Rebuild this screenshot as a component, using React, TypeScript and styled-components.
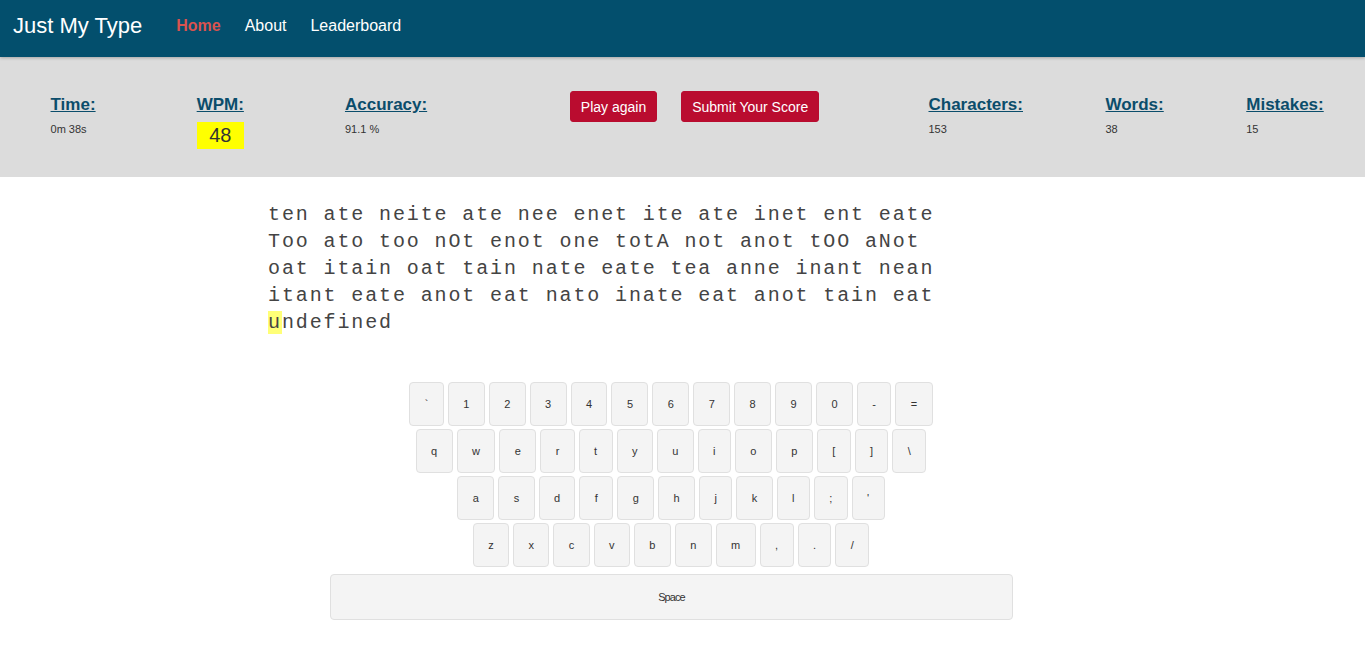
import React from "react";
import styled, { createGlobalStyle } from "styled-components";

const GlobalStyle = createGlobalStyle`
  html, body { margin: 0; padding: 0; background: #ffffff; }
  body { font-family: "Liberation Sans", Arial, sans-serif; }
  * { box-sizing: border-box; }
`;

const Header = styled.header`
  position: relative;
  z-index: 1;
  height: 57px;
  padding: 0 0 6px 13px;
  background: #034f6d;
  display: flex;
  align-items: center;
  box-shadow: 0 1px 3px rgba(0, 0, 0, 0.25);
`;

const Brand = styled.div`
  font-size: 22px;
  color: #ffffff;
  margin-right: 22px;
  white-space: nowrap;
`;

const NavLink = styled.a<{ $active?: boolean }>`
  font-size: 16px;
  padding: 0 12px;
  color: ${(p) => (p.$active ? "#d9534f" : "#ffffff")};
  font-weight: ${(p) => (p.$active ? 700 : 400)};
  text-decoration: none;
  white-space: nowrap;
`;

const Stats = styled.section`
  height: 120px;
  background: #dcdcdc;
  display: flex;
  align-items: flex-start;
  padding-top: 34px;
`;

const StatGroup = styled.div`
  width: 35%;
  display: flex;
  justify-content: space-around;
  align-items: flex-start;
  margin-top: 4px;
`;

const ButtonGroup = styled.div`
  width: 30%;
  display: flex;
  justify-content: center;
`;

const Stat = styled.div`
  display: flex;
  flex-direction: column;
`;

const StatLabel = styled.div`
  font-size: 17px;
  line-height: 20px;
  font-weight: 700;
  color: #0b4d6b;
  text-decoration: underline;
  white-space: nowrap;
`;

const StatValue = styled.div`
  margin-top: 8px;
  font-size: 11px;
  color: #333333;
  white-space: nowrap;
`;

const WpmValue = styled.div`
  margin-top: 7px;
  height: 27px;
  line-height: 27px;
  background: #ffff00;
  font-size: 20px;
  color: #333333;
  text-align: center;
`;

const ActionButton = styled.button`
  margin-left: 24px;
  height: 31px;
  padding: 0 10px;
  border: 1px solid #b80c2f;
  border-radius: 3px;
  background: #ba0c2f;
  color: #ffffff;
  font-family: "Liberation Sans", Arial, sans-serif;
  font-size: 14px;
  white-space: nowrap;
  cursor: pointer;
`;

const TypingText = styled.p`
  margin: 24px 0 0 268px;
  width: 680px;
  font-family: "Liberation Mono", "Courier New", monospace;
  font-size: 20px;
  letter-spacing: 1.88px;
  line-height: 27px;
  color: #444444;
`;

const Cursor = styled.span`
  background: #ffff77;
`;

const Keyboard = styled.div`
  margin-top: 46px;
  padding-right: 23px;
  display: flex;
  flex-direction: column;
  align-items: center;
  gap: 3px;
`;

const KeyRow = styled.div`
  display: flex;
  justify-content: center;
  gap: 4px;
`;

const Key = styled.div`
  height: 44px;
  padding: 0 14.4px;
  display: flex;
  align-items: center;
  justify-content: center;
  background: #f4f4f4;
  border: 1px solid #e0e0e0;
  border-radius: 4px;
  font-size: 11px;
  color: #333333;
`;

const SpaceKey = styled(Key)`
  width: 683px;
  height: 46px;
  margin-top: 4px;
  margin-left: 1px;
  letter-spacing: -0.9px;
`;

const rows = [
  ["`", "1", "2", "3", "4", "5", "6", "7", "8", "9", "0", "-", "="],
  ["q", "w", "e", "r", "t", "y", "u", "i", "o", "p", "[", "]", "\\"],
  ["a", "s", "d", "f", "g", "h", "j", "k", "l", ";", "'"],
  ["z", "x", "c", "v", "b", "n", "m", ",", ".", "/"],
];

const text =
  "ten ate neite ate nee enet ite ate inet ent eate Too ato too nOt enot one totA not anot tOO aNot oat itain oat tain nate eate tea anne inant nean itant eate anot eat nato inate eat anot tain eat ";

export default function App() {
  return (
    <>
      <GlobalStyle />
      <Header>
        <Brand>Just My Type</Brand>
        <NavLink $active>Home</NavLink>
        <NavLink>About</NavLink>
        <NavLink>Leaderboard</NavLink>
      </Header>
      <Stats>
        <StatGroup>
          <Stat>
            <StatLabel>Time:</StatLabel>
            <StatValue>0m 38s</StatValue>
          </Stat>
          <Stat>
            <StatLabel>WPM:</StatLabel>
            <WpmValue>48</WpmValue>
          </Stat>
          <Stat>
            <StatLabel>Accuracy:</StatLabel>
            <StatValue>91.1 %</StatValue>
          </Stat>
        </StatGroup>
        <ButtonGroup>
          <ActionButton>Play again</ActionButton>
          <ActionButton>Submit Your Score</ActionButton>
        </ButtonGroup>
        <StatGroup>
          <Stat>
            <StatLabel>Characters:</StatLabel>
            <StatValue>153</StatValue>
          </Stat>
          <Stat>
            <StatLabel>Words:</StatLabel>
            <StatValue>38</StatValue>
          </Stat>
          <Stat>
            <StatLabel>Mistakes:</StatLabel>
            <StatValue>15</StatValue>
          </Stat>
        </StatGroup>
      </Stats>
      <TypingText>
        {text}
        <Cursor>u</Cursor>ndefined
      </TypingText>
      <Keyboard>
        {rows.map((row, i) => (
          <KeyRow key={i}>
            {row.map((k) => (
              <Key key={k}>{k}</Key>
            ))}
          </KeyRow>
        ))}
        <SpaceKey>Space</SpaceKey>
      </Keyboard>
    </>
  );
}
